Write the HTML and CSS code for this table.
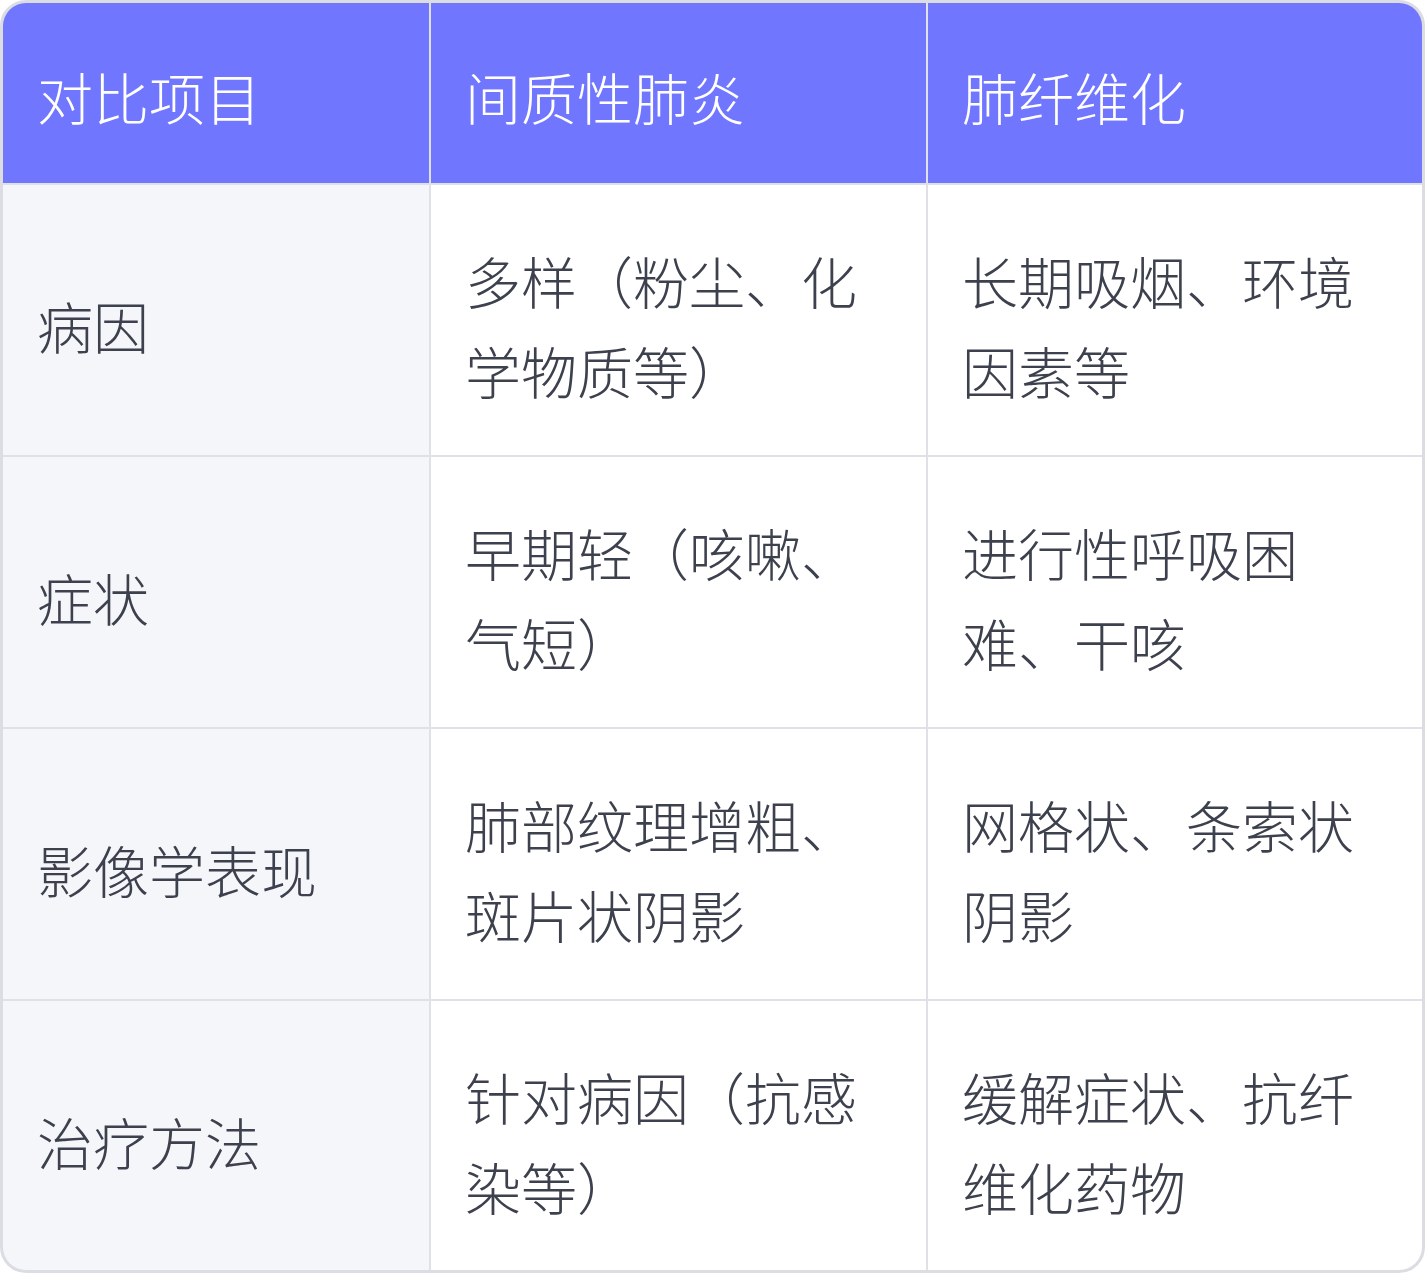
FILE: index.html
```html
<!DOCTYPE html>
<html lang="zh-CN">
<head>
<meta charset="utf-8">
<link rel="stylesheet" href="styles.css">
</head>
<body>
<div class="table">
  <div class="cell head">对比项目</div>
  <div class="cell head">间质性肺炎</div>
  <div class="cell head">肺纤维化</div>

  <div class="cell key">病因</div>
  <div class="cell">多样（粉尘、化学物质等）</div>
  <div class="cell">长期吸烟、环境因素等</div>

  <div class="cell key">症状</div>
  <div class="cell">早期轻（咳嗽、气短）</div>
  <div class="cell">进行性呼吸困难、干咳</div>

  <div class="cell key">影像学表现</div>
  <div class="cell">肺部纹理增粗、斑片状阴影</div>
  <div class="cell">网格状、条索状阴影</div>

  <div class="cell key">治疗方法</div>
  <div class="cell">针对病因（抗感染等）</div>
  <div class="cell">缓解症状、抗纤维化药物</div>
</div>
</body>
</html>
```
FILE: styles.css
```css
html, body {
  margin: 0;
  padding: 0;
  background: #ffffff;
}
.table {
  width: 1425px;
  height: 1273px;
  box-sizing: border-box;
  border: 3px solid #dcdde3;
  border-radius: 26px;
  overflow: hidden;
  display: grid;
  grid-template-columns: 426px 495px 494px;
  grid-template-rows: 180px 270px 270px 270px 269px;
  gap: 2px;
  background: #e0e1e6;
  font-family: "Noto Sans CJK SC", "Noto Sans", sans-serif;
  font-weight: 300;
  font-size: 56px;
  line-height: 90px;
  color: #3d414d;
}
.cell {
  background: #ffffff;
  padding: 10px 34px 0 34px;
  display: flex;
  align-items: center;
}
.cell.head {
  background: #7176ff;
  color: #ffffff;
  padding-top: 6px;
}
.cell.key {
  background: #f5f6fa;
}
```
